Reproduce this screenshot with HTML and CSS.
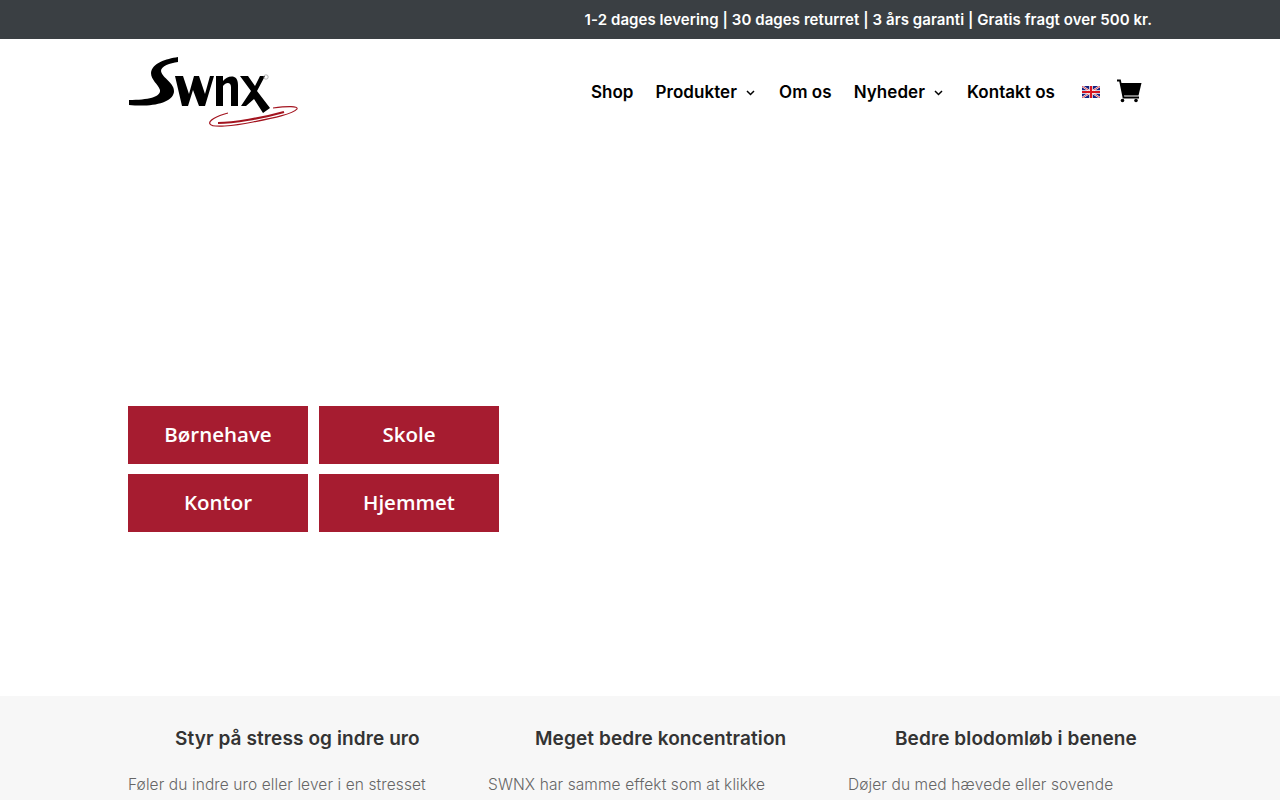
FILE: index.html
```html
<!DOCTYPE html>
<html lang="da">
<head>
<meta charset="utf-8">
<title>SWNX</title>
<link rel="stylesheet" href="styles.css">
</head>
<body>
<div class="topbar"><div class="wrap topbar-in"><span>1-2 dages levering | 30 dages returret | 3 års garanti | Gratis fragt over 500 kr.</span></div></div>
<header class="header">
  <div class="wrap header-in">
    <svg class="logo" width="170" height="73" viewBox="0 0 170 73" aria-label="Swnx">
      <path d="M50 1 C38 3 24 7 23 17 C23 24 30 28 32 34 C33 41 20 44 1 44 L1 49 C22 51 44 48 46 36 C47 27 34 22 33 15 C33 10 42 7 50 6Z" fill="#000"/>
      <path d="M47 20 L55 20 L61 38 L66 20 L71 20 L77 38 L82 20 L86 20 L77 50 L71 50 L65 34 L60 50 L54 50Z" fill="#000"/>
      <path d="M88 20 L95 20 L95 25 C99 20 110 17 110 29 L110 50 L103 50 L103 31 C103 26 98 26 95 30 L95 50 L88 50Z" fill="#000"/>
      <path d="M112 20 L120 20 L127 30 L132 20 L137 20 L129 35 L142 52 L135 57 L126 43 L118 50 L113 50 L123 35Z" fill="#000"/>
      <circle cx="138" cy="21" r="2.2" fill="none" stroke="#999" stroke-width=".7"/>
      <path d="M100 57 C88 60 80 65 82 68 C84 72 105 70 125 66 C145 62 165 58 169 53 C170 50 160 50 145 52" fill="none" stroke="#a3141f" stroke-width="1.2"/>
      <path d="M90 67 C105 67 135 62 156 56" fill="none" stroke="#a3141f" stroke-width="2.2"/>
    </svg>
    <nav class="nav">
      <a class="nav-item">Shop</a>
      <a class="nav-item">Produkter<svg class="chev" width="9" height="6" viewBox="0 0 9 6"><path d="M1 1 L4.5 4.5 L8 1" fill="none" stroke="#000" stroke-width="1.5"/></svg></a>
      <a class="nav-item">Om os</a>
      <a class="nav-item">Nyheder<svg class="chev" width="9" height="6" viewBox="0 0 9 6"><path d="M1 1 L4.5 4.5 L8 1" fill="none" stroke="#000" stroke-width="1.5"/></svg></a>
      <a class="nav-item">Kontakt os</a>
    </nav>
    <svg class="flag" width="18" height="12" viewBox="0 0 18 12">
      <rect width="18" height="12" fill="#14207f"/>
      <path d="M0 0 L18 12 M18 0 L0 12" stroke="#fff" stroke-width="2"/>
      <path d="M0 0 L18 12 M18 0 L0 12" stroke="#d8141f" stroke-width=".8"/>
      <path d="M9 0 V12 M0 6 H18" stroke="#fff" stroke-width="3.6"/>
      <path d="M9 0 V12 M0 6 H18" stroke="#d8141f" stroke-width="2.2"/>
    </svg>
    <svg class="cart" width="26" height="24" viewBox="0 0 26 24">
      <path d="M1 1.5 H4 L7.5 18.5 H23" fill="none" stroke="#000" stroke-width="1.8"/>
      <path d="M4.5 4 H25.5 L22.5 16.5 H7Z" fill="#000"/>
      <circle cx="6.5" cy="21.5" r="1.8" fill="#000"/>
      <circle cx="20" cy="21.5" r="1.8" fill="#000"/>
    </svg>
  </div>
</header>
<main class="hero">
  <div class="wrap btn-grid">
    <a class="btn">Børnehave</a>
    <a class="btn">Skole</a>
    <a class="btn">Kontor</a>
    <a class="btn">Hjemmet</a>
  </div>
</main>
<section class="benefits">
  <div class="wrap cols">
    <div class="col"><h3>Styr på stress og indre uro</h3><p>Føler du indre uro eller lever i en stresset</p></div>
    <div class="col"><h3>Meget bedre koncentration</h3><p>SWNX har samme effekt som at klikke</p></div>
    <div class="col"><h3>Bedre blodomløb i benene</h3><p>Døjer du med hævede eller sovende</p></div>
  </div>
</section>
</body>
</html>
```
FILE: styles.css
```css
* { box-sizing: border-box; }
html, body { margin: 0; padding: 0; }
body { height: 800px; overflow: hidden; background: #fff; font-family: "Inter", "Liberation Sans", sans-serif; }
.wrap { width: 1024px; margin: 0 auto; }
.topbar { height: 39px; background: #3a3f43; color: #fff; font-size: 15px; font-weight: 600; }
.topbar-in { height: 39px; display: flex; align-items: center; justify-content: flex-end; }
.topbar-in span { letter-spacing: 0.07px; }
.header { height: 107px; }
.header-in { display: flex; align-items: flex-start; height: 107px; }
.logo { margin-top: 17px; }
.nav { display: flex; gap: 22px; margin-left: auto; margin-top: 42px; font-size: 17px; font-weight: 600; letter-spacing: 0.05px; color: #000; }
.nav-item { display: flex; align-items: center; height: 22px; }
.chev { margin-left: 9px; margin-right: 2px; margin-top: 1px; }
.flag { margin-left: 27px; margin-top: 47px; }
.cart { margin-left: 16px; margin-top: 40px; margin-right: 10px; }
.hero { height: 550px; padding-top: 260px; }
.btn-grid { display: grid; grid-template-columns: 180px 180px; column-gap: 11px; row-gap: 10px; }
.btn { height: 58px; padding-bottom: 2px; background: #a61c30; color: #fff; display: flex; align-items: center; justify-content: center; font-family: "Open Sans", sans-serif; font-weight: 600; font-size: 20.5px; }
.benefits { background: #f7f7f7; height: 104px; padding-top: 30px; overflow: hidden; }
.cols { display: grid; grid-template-columns: repeat(3, 320px); column-gap: 40px; }
.col h3 { margin: 0; padding-left: 47px; font-size: 19px; line-height: 26px; font-weight: 600; letter-spacing: 0.1px; color: #333; white-space: nowrap; }
.col p { margin: 20px 0 0; font-size: 15.5px; line-height: 26px; font-weight: 300; letter-spacing: 0.1px; color: #666; white-space: nowrap; }
```
